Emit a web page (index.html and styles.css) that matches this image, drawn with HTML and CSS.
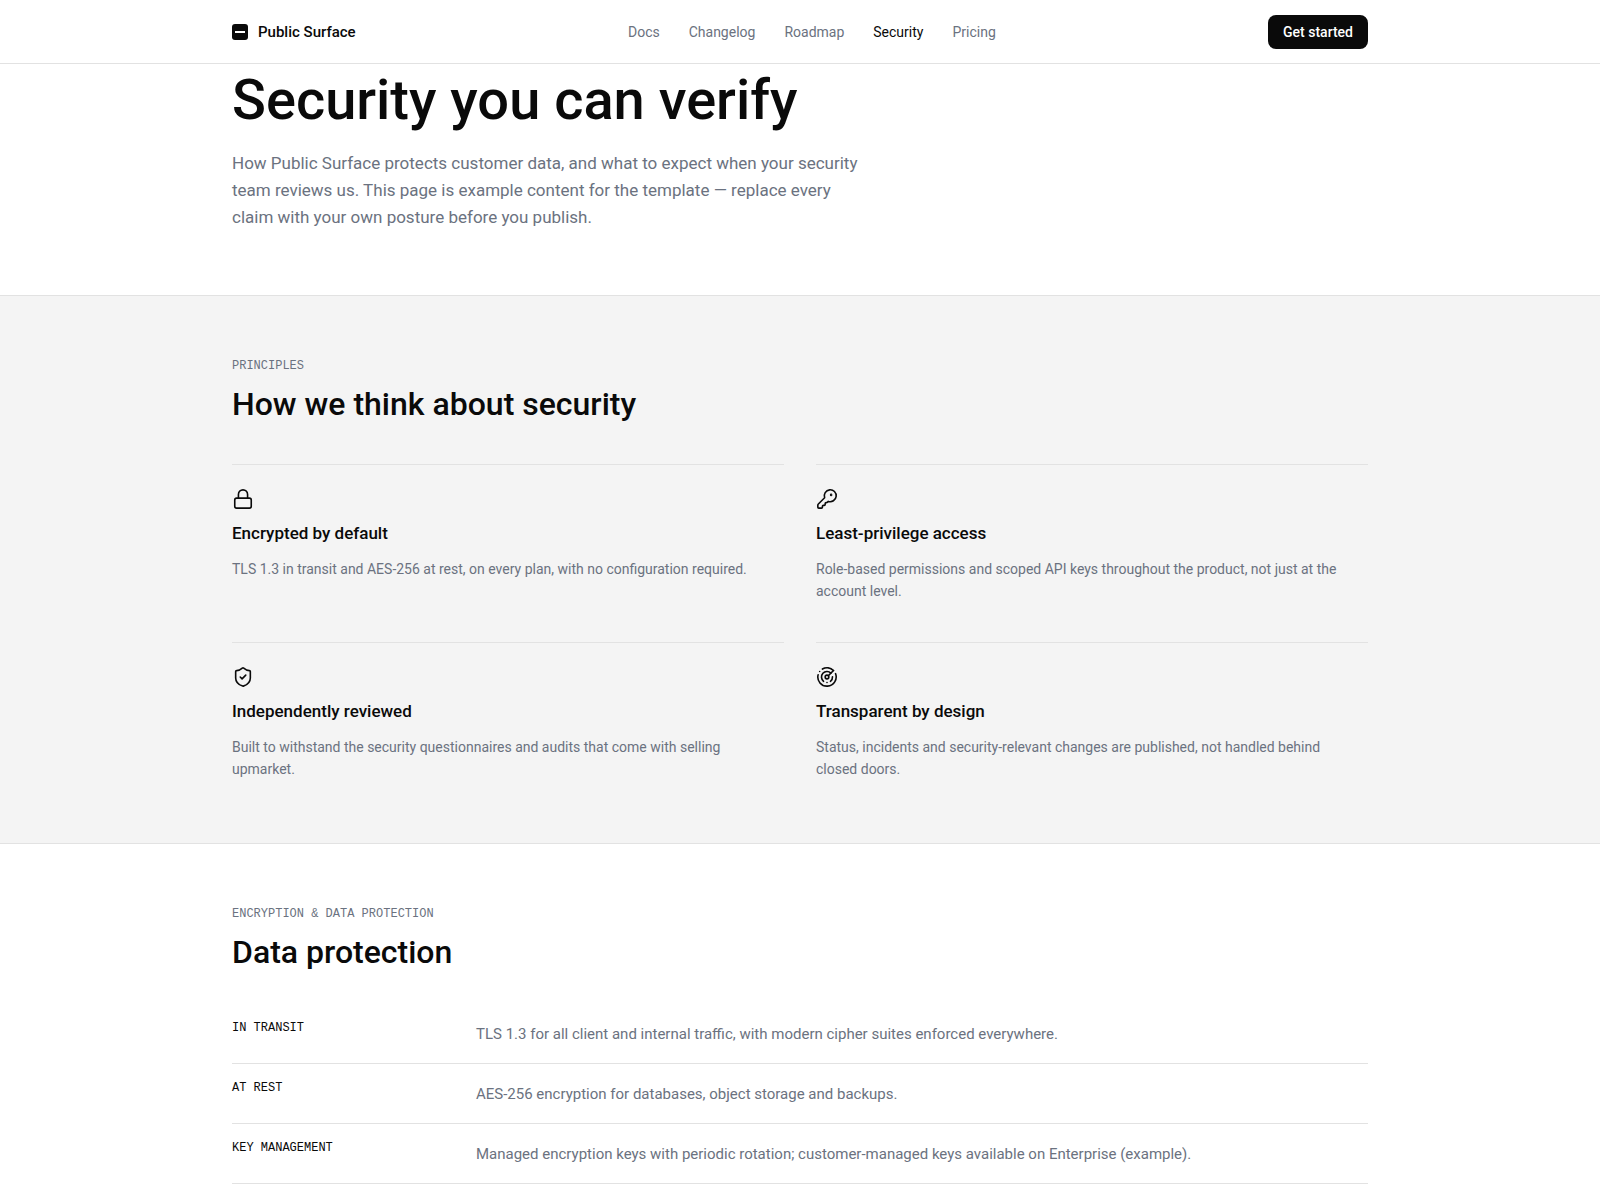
FILE: index.html
```
<!DOCTYPE html>
<html lang="en">
<head>
    <meta charset="UTF-8">
    <meta name="viewport" content="width=device-width, initial-scale=1.0">
    <title>Security - Public Surface</title>
    <link rel="stylesheet" href="styles.css">
</head>
<body>
    <header class="site-header">
        <div class="container header-row">
            <a class="brand" href="#">
                <svg class="brand-mark" viewBox="0 0 16 16" aria-hidden="true">
                    <rect width="16" height="16" rx="3" fill="#0a0a0a"/>
                    <rect x="3" y="7" width="10" height="2" fill="#fff"/>
                </svg>
                Public Surface
            </a>
            <nav class="site-nav">
                <a href="#">Docs</a>
                <a href="#">Changelog</a>
                <a href="#">Roadmap</a>
                <a class="active" href="#" aria-current="page">Security</a>
                <a href="#">Pricing</a>
            </nav>
            <button class="btn" type="button">Get started</button>
        </div>
    </header>

    <main>
        <section class="hero">
            <div class="container">
                <h1>Security you can verify</h1>
                <p class="lead">How Public Surface protects customer data, and what to expect when your security team reviews us. This page is example content for the template — replace every claim with your own posture before you publish.</p>
            </div>
        </section>

        <section class="section section-muted">
            <div class="container">
                <p class="eyebrow">Principles</p>
                <h2>How we think about security</h2>
                <div class="principles">
                    <article class="principle">
                        <svg class="icon" viewBox="0 0 24 24" aria-hidden="true">
                            <rect x="3" y="11" width="18" height="11" rx="2"/>
                            <path d="M7 11V7a5 5 0 0 1 10 0v4"/>
                        </svg>
                        <h3>Encrypted by default</h3>
                        <p>TLS 1.3 in transit and AES-256 at rest, on every plan, with no configuration required.</p>
                    </article>
                    <article class="principle">
                        <svg class="icon" viewBox="0 0 24 24" aria-hidden="true">
                            <path d="M2.586 17.414A2 2 0 0 0 2 18.828V21a1 1 0 0 0 1 1h3a1 1 0 0 0 1-1v-1a1 1 0 0 1 1-1h1a1 1 0 0 0 1-1v-1a1 1 0 0 1 1-1h.172a2 2 0 0 0 1.414-.586l.814-.814a6.5 6.5 0 1 0-4-4z"/>
                            <circle cx="16.5" cy="7.5" r=".5" fill="currentColor"/>
                        </svg>
                        <h3>Least-privilege access</h3>
                        <p>Role-based permissions and scoped API keys throughout the product, not just at the account level.</p>
                    </article>
                    <article class="principle">
                        <svg class="icon" viewBox="0 0 24 24" aria-hidden="true">
                            <path d="M20 13c0 5-3.5 7.5-7.66 8.95a1 1 0 0 1-.67-.01C7.5 20.5 4 18 4 13V6a1 1 0 0 1 1-1c2 0 4.5-1.2 6.24-2.72a1.17 1.17 0 0 1 1.52 0C14.51 3.81 17 5 19 5a1 1 0 0 1 1 1z"/>
                            <path d="m9 12 2 2 4-4"/>
                        </svg>
                        <h3>Independently reviewed</h3>
                        <p>Built to withstand the security questionnaires and audits that come with selling upmarket.</p>
                    </article>
                    <article class="principle">
                        <svg class="icon" viewBox="0 0 24 24" aria-hidden="true">
                            <path d="M19.07 4.93A10 10 0 0 0 6.99 3.34"/>
                            <path d="M4 6h.01"/>
                            <path d="M2.29 9.62A10 10 0 1 0 21.31 8.35"/>
                            <path d="M16.24 7.76A6 6 0 1 0 8.23 16.67"/>
                            <path d="M12 18h.01"/>
                            <path d="M17.99 11.66A6 6 0 0 1 15.77 16.67"/>
                            <circle cx="12" cy="12" r="2"/>
                            <path d="m13.41 10.59 5.66-5.66"/>
                        </svg>
                        <h3>Transparent by design</h3>
                        <p>Status, incidents and security-relevant changes are published, not handled behind closed doors.</p>
                    </article>
                </div>
            </div>
        </section>

        <section class="section section-last">
            <div class="container">
                <p class="eyebrow">Encryption &amp; data protection</p>
                <h2>Data protection</h2>
                <dl class="specs">
                    <div class="spec">
                        <dt>In transit</dt>
                        <dd>TLS 1.3 for all client and internal traffic, with modern cipher suites enforced everywhere.</dd>
                    </div>
                    <div class="spec">
                        <dt>At rest</dt>
                        <dd>AES-256 encryption for databases, object storage and backups.</dd>
                    </div>
                    <div class="spec">
                        <dt>Key management</dt>
                        <dd>Managed encryption keys with periodic rotation; customer-managed keys available on Enterprise (example).</dd>
                    </div>
                </dl>
            </div>
        </section>
    </main>
</body>
</html>
```
FILE: styles.css
```
:root {
    --ink: #0a0a0a;
    --muted: #6b7280;
    --line: #e2e2e2;
    --surface: #f4f4f4;
    --sans: Roboto, "Liberation Sans", sans-serif;
    --mono: "Liberation Mono", monospace;
}
* {
    box-sizing: border-box;
}
body {
    margin: 0;
    font-family: var(--sans);
    color: var(--ink);
    background-color: #fff;
}
h1, h2, h3, p, dl, dd {
    margin: 0;
}
h1, h2, h3 {
    font-weight: 500;
}
.container {
    max-width: 1200px;
    margin: 0 auto;
    padding: 0 32px;
}

/* Header */
.site-header {
    position: sticky;
    top: 0;
    z-index: 10;
    background-color: #fff;
    border-bottom: 1px solid var(--line);
}
.header-row {
    display: flex;
    align-items: center;
    justify-content: space-between;
    height: 63px;
}
.brand {
    display: flex;
    align-items: center;
    gap: 10px;
    color: var(--ink);
    font-size: 15px;
    font-weight: 500;
    text-decoration: none;
}
.brand-mark {
    width: 16px;
    height: 16px;
}
.site-nav {
    display: flex;
    gap: 29px;
}
.site-nav a {
    color: var(--muted);
    font-size: 14px;
    text-decoration: none;
}
.site-nav a:hover,
.site-nav .active {
    color: var(--ink);
}
.btn {
    height: 34px;
    padding: 0 15px;
    font-family: inherit;
    font-size: 14px;
    font-weight: 500;
    color: #fff;
    background-color: var(--ink);
    border: none;
    border-radius: 8px;
    cursor: pointer;
}

/* Hero */
.hero {
    padding: 6px 0 64px;
}
.hero h1 {
    font-size: 56px;
    line-height: 60px;
}
.lead {
    max-width: 640px;
    margin-top: 20px;
    font-size: 17px;
    line-height: 27px;
    color: var(--muted);
}

/* Sections */
.section {
    padding: 64px 0;
}
.section-muted {
    background-color: var(--surface);
    border-top: 1px solid var(--line);
    border-bottom: 1px solid var(--line);
}
.section-last {
    padding-bottom: 16px;
}
.eyebrow {
    font-family: var(--mono);
    font-size: 12px;
    line-height: 12px;
    text-transform: uppercase;
    color: var(--muted);
}
.section h2 {
    margin: 12px 0 32px;
    font-size: 32px;
    line-height: 40px;
}

/* Principles */
.principles {
    display: grid;
    grid-template-columns: 1fr 1fr;
    gap: 40px 32px;
    padding-top: 8px;
}
.principle {
    padding-top: 23px;
    border-top: 1px solid var(--line);
}
.icon {
    display: block;
    width: 22px;
    height: 22px;
    fill: none;
    stroke: currentColor;
    stroke-width: 1.75;
    stroke-linecap: round;
    stroke-linejoin: round;
}
.principle h3 {
    margin: 11px 0 13px;
    font-size: 17px;
    line-height: 24px;
}
.principle p {
    max-width: 540px;
    font-size: 14px;
    line-height: 22px;
    color: var(--muted);
}
.section-muted {
    padding-bottom: 63px;
}

/* Data protection list */
.spec {
    display: grid;
    grid-template-columns: 220px 1fr;
    gap: 24px;
    padding: 18px 0 16px;
    border-bottom: 1px solid var(--line);
}
.spec dt {
    font-family: var(--mono);
    font-size: 12px;
    line-height: 12px;
    text-transform: uppercase;
}
.spec dd {
    font-size: 15px;
    line-height: 25px;
    color: var(--muted);
}
```
